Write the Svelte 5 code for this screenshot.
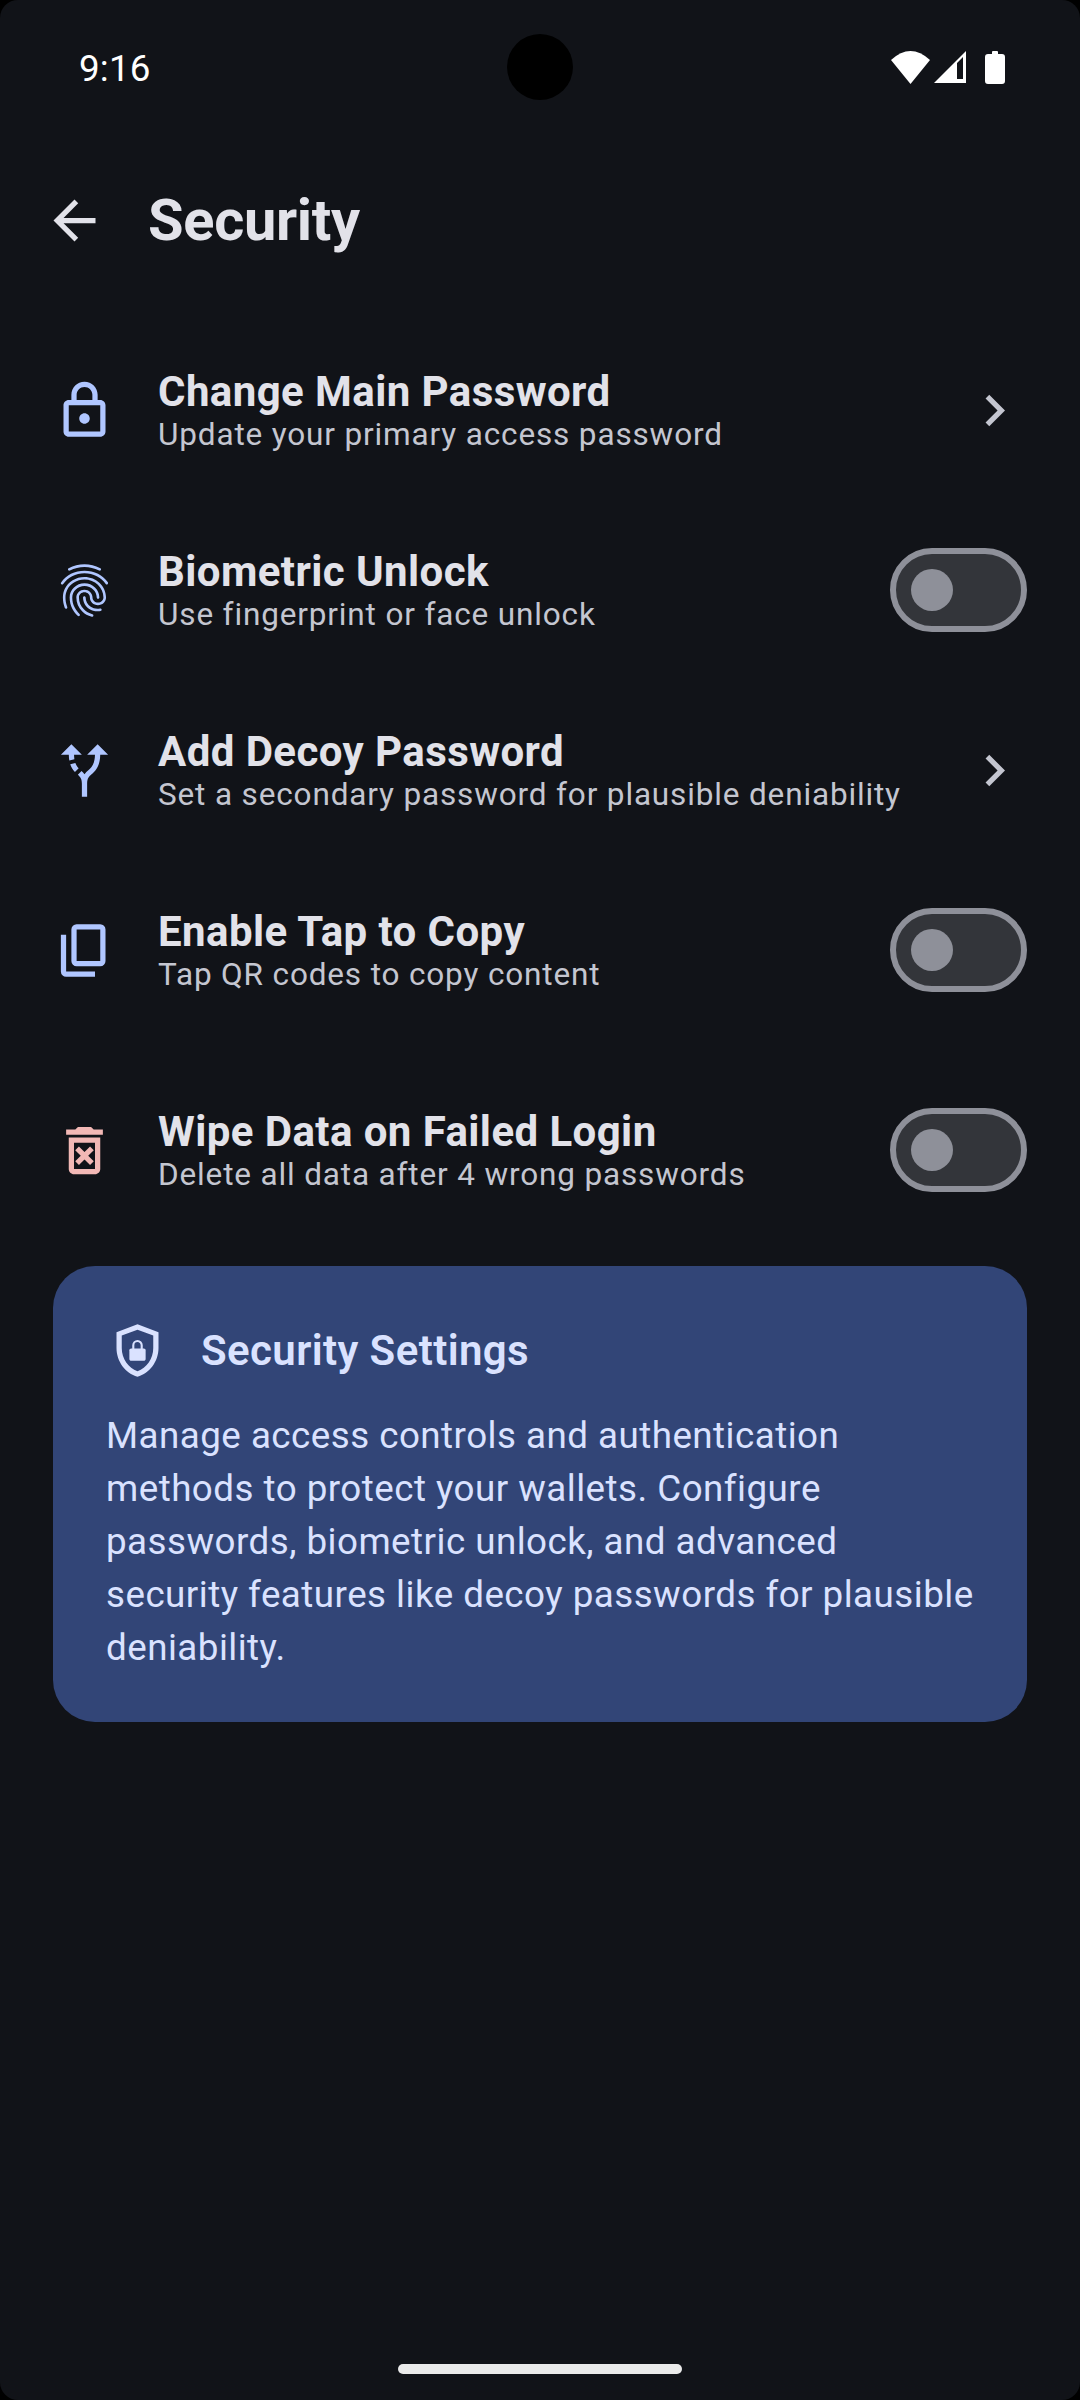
<script lang="ts">
  const rows = [
    { title: "Change Main Password", sub: "Update your primary access password", icon: "lock", action: "chevron" },
    { title: "Biometric Unlock", sub: "Use fingerprint or face unlock", icon: "fingerprint", action: "toggle" },
    { title: "Add Decoy Password", sub: "Set a secondary password for plausible deniability", icon: "route", action: "chevron" },
    { title: "Enable Tap to Copy", sub: "Tap QR codes to copy content", icon: "copy", action: "toggle" },
    { title: "Wipe Data on Failed Login", sub: "Delete all data after 4 wrong passwords", icon: "wipe", action: "toggle", danger: true }
  ];

  const icons: Record<string, string> = {
    lock: "M18 8h-1V6c0-2.76-2.24-5-5-5S7 3.24 7 6v2H6c-1.1 0-2 .9-2 2v10c0 1.1.9 2 2 2h12c1.1 0 2-.9 2-2V10c0-1.1-.9-2-2-2zM9 6c0-1.66 1.34-3 3-3s3 1.34 3 3v2H9V6zm9 14H6V10h12v10zm-6-3c1.1 0 2-.9 2-2s-.9-2-2-2-2 .9-2 2 .9 2 2 2z",
    fingerprint: "M17.81 4.47c-.08 0-.16-.02-.23-.06C15.66 3.42 14 3 12.01 3c-1.98 0-3.86.47-5.57 1.41-.24.13-.54.04-.68-.2-.13-.24-.04-.55.2-.68C7.82 2.52 9.86 2 12.01 2c2.13 0 3.99.47 6.03 1.52.25.13.34.43.21.67-.09.18-.26.28-.44.28zM3.5 9.72c-.1 0-.2-.03-.29-.09-.23-.16-.28-.47-.12-.7.99-1.4 2.25-2.5 3.75-3.27C9.98 4.04 14 4.03 17.15 5.65c1.5.77 2.76 1.86 3.75 3.25.16.22.11.54-.12.7-.23.16-.54.11-.7-.12-.9-1.26-2.04-2.25-3.39-2.94-2.87-1.47-6.54-1.47-9.4.01-1.36.7-2.5 1.7-3.4 2.96-.08.14-.23.21-.39.21zm6.25 12.07c-.13 0-.26-.05-.35-.15-.87-.87-1.34-1.43-2.01-2.64-.69-1.23-1.05-2.73-1.05-4.34 0-2.97 2.54-5.39 5.66-5.39s5.66 2.42 5.66 5.39c0 .28-.22.5-.5.5s-.5-.22-.5-.5c0-2.42-2.09-4.39-4.66-4.39-2.57 0-4.66 1.97-4.66 4.39 0 1.44.32 2.77.93 3.85.64 1.15 1.08 1.64 1.85 2.42.19.2.19.51 0 .71-.11.1-.24.15-.37.15zm7.17-1.85c-1.19 0-2.24-.3-3.1-.89-1.49-1.01-2.38-2.65-2.38-4.39 0-.28.22-.5.5-.5s.5.22.5.5c0 1.41.72 2.74 1.94 3.56.71.48 1.54.71 2.54.71.24 0 .64-.03 1.04-.1.27-.05.53.13.58.41.05.27-.13.53-.41.58-.57.11-1.07.12-1.21.12zM14.91 22c-.04 0-.09-.01-.13-.02-1.59-.44-2.63-1.03-3.72-2.1-1.4-1.39-2.17-3.24-2.17-5.22 0-1.62 1.38-2.94 3.08-2.94 1.7 0 3.08 1.32 3.08 2.94 0 1.07.93 1.94 2.08 1.94s2.08-.87 2.08-1.94c0-3.77-3.25-6.83-7.25-6.83-2.84 0-5.44 1.58-6.61 4.03-.39.81-.59 1.76-.59 2.8 0 .78.07 2.01.67 3.61.1.26-.03.55-.29.64-.26.1-.55-.04-.64-.29-.49-1.31-.73-2.61-.73-3.96 0-1.2.23-2.29.68-3.24 1.33-2.79 4.28-4.6 7.51-4.6 4.55 0 8.25 3.51 8.25 7.83 0 1.62-1.38 2.94-3.08 2.94s-3.08-1.32-3.08-2.94c0-1.07-.93-1.94-2.08-1.94s-2.08.87-2.08 1.94c0 1.71.66 3.31 1.87 4.51.95.94 1.86 1.46 3.27 1.85.27.07.42.35.35.61-.05.23-.26.38-.47.38z",
    route: "M9.78 11.16l-1.42 1.42c-.68-.69-1.34-1.58-1.79-2.94l1.94-.49c.32.89.77 1.5 1.27 2.01zM11 6L7 2 3 6h3.02c.02.81.08 1.54.19 2.17l1.94-.49C8.08 7.2 8.03 6.63 8.02 6H11zm10 0l-4-4-4 4h2.99c-.1 3.68-1.28 4.75-2.54 5.88-.5.44-1.01.92-1.45 1.55-.34-.49-.73-.88-1.13-1.24L9.46 13.6c.93.85 1.54 1.54 1.54 3.4v5h2v-5c0-2.02.71-2.66 1.79-3.63 1.38-1.24 3.08-2.78 3.2-7.37H21z",
    copy: "M9 18q-.825 0-1.412-.587Q7 16.825 7 16V4q0-.825.588-1.413Q8.175 2 9 2h9q.825 0 1.413.587Q20 3.175 20 4v12q0 .825-.587 1.413Q18.825 18 18 18Zm0-2h9V4H9v12Zm-4 6q-.825 0-1.413-.587Q3 20.825 3 20V6h2v14h11v2Z",
    wipe: "M14.12 10.47L12 12.59l-2.13-2.12-1.41 1.41L10.59 14l-2.12 2.12 1.41 1.41L12 15.41l2.12 2.12 1.41-1.41L13.41 14l2.12-2.12zM15.5 4l-1-1h-5l-1 1H5v2h14V4zM6 19c0 1.1.9 2 2 2h8c1.1 0 2-.9 2-2V7H6v12zM8 9h8v10H8V9z"
  };
</script>

<div class="screen">
  <div class="status">
    <span class="time">9:16</span>
    <span class="camera"></span>
    <div class="status-icons">
      <svg width="39" height="33" viewBox="0 0 39 33"><path d="M19.5 33L0 9Q19.5-9 39 9Z" fill="#fff" /></svg>
      <svg width="32" height="32" viewBox="0 0 32 32"><path fill-rule="evenodd" d="M32 0V32H0ZM29 6l-6 6V28H29Z" fill="#fff" /></svg>
      <svg width="20" height="33" viewBox="0 0 20 33"><path d="M8 0h4a1 1 0 0 1 1 1V3h4a3 3 0 0 1 3 3V30a3 3 0 0 1-3 3H3a3 3 0 0 1-3-3V6a3 3 0 0 1 3-3H7V1a1 1 0 0 1 1-1Z" fill="#fff" /></svg>
    </div>
  </div>

  <header class="top">
    <svg class="icon back" viewBox="0 0 24 24"><path d="M20 11H7.830l5.590-5.590L12 4l-8 8 8 8 1.410-1.410L7.830 13H20v-2z" /></svg>
    <h1>Security</h1>
  </header>

  <div class="list">
    {#each rows as row}
      <div class="row" class:danger={row.danger}>
        <svg class="icon lead" viewBox="0 0 24 24"><path d={icons[row.icon]} /></svg>
        <div class="text">
          <div class="title">{row.title}</div>
          <div class="sub">{row.sub}</div>
        </div>
        {#if row.action === "chevron"}
          <svg class="icon chevron" viewBox="0 0 24 24"><path d="M10 6 8.59 7.41 13.17 12l-4.58 4.59L10 18l6-6z" /></svg>
        {:else}
          <span class="switch"><span class="knob"></span></span>
        {/if}
      </div>
    {/each}
  </div>

  <section class="card">
    <div class="card-head">
      <svg class="icon" viewBox="0 0 24 24">
        <path d="M12 2 4 5v6.090c0 5.050 3.410 9.760 8 10.910 4.590-1.150 8-5.860 8-10.910V5l-8-3zm6 9.090c0 4-2.550 7.700-6 8.830-3.450-1.130-6-4.820-6-8.830V6.310l6-2.250 6 2.250v4.780z" />
        <path d="M9.600 11.200h4.800c.4 0 .7.300.7.700v3.300c0 .4-.3.700-.7.700H9.600c-.4 0-.7-.3-.7-.7v-3.300c0-.4.300-.7.700-.7z" />
        <path class="shackle" d="M10.400 11.500v-1.500a1.600 1.600 0 0 1 3.200 0v1.500" />
      </svg>
      <h2>Security Settings</h2>
    </div>
    <p>Manage access controls and authentication methods to protect your wallets. Configure passwords, biometric unlock, and advanced security features like decoy passwords for plausible deniability.</p>
  </section>

  <div class="nav-pill"></div>
</div>

<style>
  :global(body) {
    background: #000;
  }

  .screen {
    height: 2400px;
    position: relative;
    display: flex;
    flex-direction: column;
    background: #111318;
    border-radius: 18px;
    overflow: hidden;
    font-family: Roboto, "Noto Sans", sans-serif;
    color: #e2e2e9;
  }

  .status {
    height: 134px;
    flex: none;
    display: grid;
    grid-template-columns: 1fr auto 1fr;
    align-items: center;
    padding: 0 75px;
  }

  .time {
    margin: 2px 0 0 4px;
    font-size: 36.75px;
    letter-spacing: 0.2px;
    color: #fff;
  }

  .camera {
    width: 66px;
    height: 66px;
    border-radius: 50%;
    background: #000;
  }

  .status-icons {
    display: flex;
    align-items: center;
    justify-content: flex-end;
    gap: 4px;
  }

  .status-icons svg:last-child {
    margin-left: 15px;
  }

  .icon {
    width: 63px;
    height: 63px;
    flex: none;
    fill: currentColor;
  }

  .top {
    height: 172px;
    flex: none;
    display: flex;
    align-items: center;
    padding-left: 43px;
  }

  h1 {
    margin: 0 0 0 42px;
    font-size: 57.75px;
    font-weight: 700;
    letter-spacing: -0.3px;
  }

  .list {
    padding-top: 14px;
  }

  .row {
    height: 180px;
    display: flex;
    align-items: center;
    padding: 0 53px;
  }

  .row:last-child {
    margin-top: 20px;
  }

  .lead {
    color: #b0c6ff;
  }

  .danger .lead {
    color: #f2b8b5;
  }

  .text {
    flex: 1;
    margin-left: 42px;
    padding-top: 4px;
  }

  .title {
    font-size: 42px;
    line-height: 44px;
    font-weight: 700;
    letter-spacing: 0.42px;
  }

  .sub {
    font-size: 31.5px;
    line-height: 41px;
    letter-spacing: 0.85px;
    color: #c4c6d0;
  }

  .chevron {
    color: #c4c6d0;
    margin-right: 1px;
  }

  .switch {
    width: 137px;
    height: 84px;
    flex: none;
    box-sizing: border-box;
    display: flex;
    align-items: center;
    padding-left: 15px;
    border: 6px solid #8e9099;
    border-radius: 42px;
    background: #33353a;
  }

  .knob {
    width: 42px;
    height: 42px;
    border-radius: 50%;
    background: #8e9099;
  }

  .card {
    margin: 26px 53px 0;
    height: 456px;
    box-sizing: border-box;
    padding: 53px 51px 0 53px;
    border-radius: 42px;
    background: #324577;
    color: #dae2ff;
  }

  .card-head {
    display: flex;
    align-items: center;
    gap: 32px;
  }

  .shackle {
    fill: none;
    stroke: currentColor;
    stroke-width: 0.8;
  }

  h2 {
    margin: 0;
    font-size: 42px;
    font-weight: 600;
    letter-spacing: 0.4px;
  }

  .card p {
    margin: 27px 0 0;
    font-size: 36.75px;
    line-height: 53px;
    letter-spacing: 0.47px;
  }

  .nav-pill {
    position: absolute;
    left: 398px;
    bottom: 26px;
    width: 284px;
    height: 10px;
    border-radius: 5px;
    background: #eaeaea;
  }
</style>
